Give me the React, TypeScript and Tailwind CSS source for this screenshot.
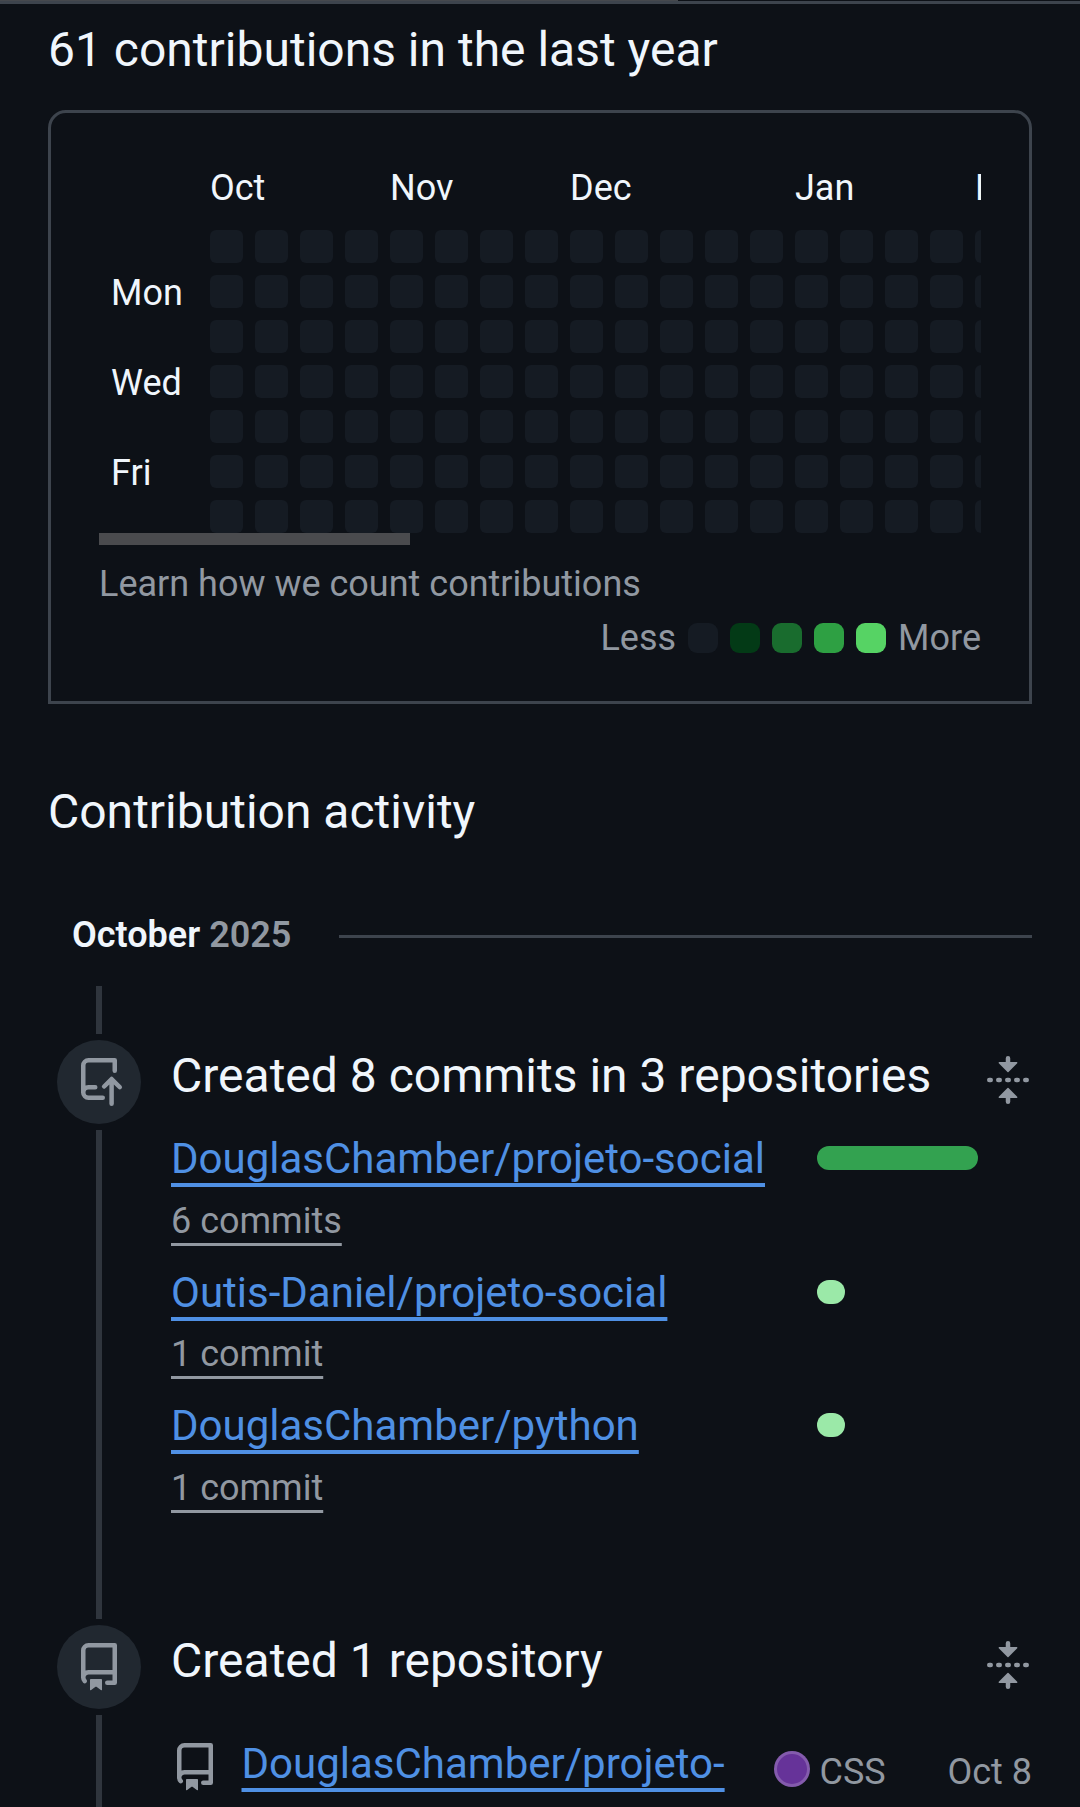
import type { ReactNode } from "react";

const MONTHS = [
  { label: "Oct", span: 4 },
  { label: "Nov", span: 4 },
  { label: "Dec", span: 5 },
  { label: "Jan", span: 4 },
  { label: "Feb", span: 4 },
];
const DAYS = ["", "Mon", "", "Wed", "", "Fri", ""];
const WEEKS = 21;

const LEVELS = ["bg-[#151b23]", "bg-[#033a16]", "bg-[#196c2e]", "bg-[#2ea043]", "bg-[#56d364]"];

const REPOS = [
  { name: "DouglasChamber/projeto-social", commits: "6 commits", width: 161, color: "bg-[#33a250]", row: "h-[134px]", head: "h-[67px]" },
  { name: "Outis-Daniel/projeto-social", commits: "1 commit", width: 28, color: "bg-[#9be9a8]", row: "h-[133px]", head: "h-[66px]" },
  { name: "DouglasChamber/python", commits: "1 commit", width: 28, color: "bg-[#9be9a8]", row: "h-[134px]", head: "h-[67px]" },
];

function Octicon({ d, className = "" }: { d: string; className?: string }) {
  return (
    <svg viewBox="0 0 16 16" className={`size-12 shrink-0 fill-[#9198a1] ${className}`} aria-hidden="true">
      <path d={d} />
    </svg>
  );
}

const REPO =
  "M2 2.5A2.5 2.5 0 0 1 4.5 0h8.75a.75.75 0 0 1 .75.75v12.5a.75.75 0 0 1-.75.75h-2.5a.75.75 0 0 1 0-1.5h1.75v-2h-8a1 1 0 0 0-.714 1.7.75.75 0 1 1-1.072 1.05A2.495 2.495 0 0 1 2 11.5Zm10.5-1h-8a1 1 0 0 0-1 1v6.708A2.486 2.486 0 0 1 4.5 9h8ZM5 12.25a.25.25 0 0 1 .25-.25h3.5a.25.25 0 0 1 .25.25v3.25a.25.25 0 0 1-.4.2l-1.45-1.087a.249.249 0 0 0-.3 0L5.4 15.7a.25.25 0 0 1-.4-.2Z";
const REPO_PUSH =
  "M2 2.5A2.5 2.5 0 0 1 4.5 0h8.75a.75.75 0 0 1 .75.75v3.5a.75.75 0 0 1-1.5 0V1.5h-8a1 1 0 0 0-1 1v6.708A2.493 2.493 0 0 1 4.5 9h2.25a.75.75 0 0 1 0 1.5H4.5a1 1 0 0 0 0 2h4.75a.75.75 0 0 1 0 1.5H4.5A2.5 2.5 0 0 1 2 11.5Zm12.43 7.79-1.48-1.484v6.444a.75.75 0 0 1-1.5 0V8.811l-1.22 1.22a.75.75 0 0 1-1.06-1.062l2.505-2.504a.75.75 0 0 1 1.06 0L15.49 9.23a.751.751 0 0 1-1.06 1.06Z";
const FOLD =
  "M10.896 2H8.75V.75a.75.75 0 0 0-1.5 0V2H5.104a.25.25 0 0 0-.177.427l2.896 2.896a.25.25 0 0 0 .354 0l2.896-2.896A.25.25 0 0 0 10.896 2ZM8.75 15.25a.75.75 0 0 1-1.5 0V14H5.104a.25.25 0 0 1-.177-.427l2.896-2.896a.25.25 0 0 1 .354 0l2.896 2.896a.25.25 0 0 1-.177.427H8.75v1.25Zm-6.5-6.5a.75.75 0 0 0 0-1.5h-.5a.75.75 0 0 0 0 1.5h.5ZM6 8a.75.75 0 0 1-.75.75h-.5a.75.75 0 0 1 0-1.5h.5A.75.75 0 0 1 6 8Zm2.25.75a.75.75 0 0 0 0-1.5h-.5a.75.75 0 0 0 0 1.5h.5ZM12 8a.75.75 0 0 1-.75.75h-.5a.75.75 0 0 1 0-1.5h.5A.75.75 0 0 1 12 8Zm2.25.75a.75.75 0 0 0 0-1.5h-.5a.75.75 0 0 0 0 1.5h.5Z";

const LINK =
  "text-[42px] leading-[63px] whitespace-nowrap text-[#4f90e4] underline decoration-[4px] underline-offset-[10px] [text-decoration-skip-ink:none]";

function Calendar() {
  return (
    <div className="overflow-hidden">
      <div className="ml-[111px] flex">
        {MONTHS.map((m) => (
          <div
            key={m.label}
            className={`shrink-0 text-[36px] leading-[42px] ${m.span === 5 ? "w-[225px]" : "w-[180px]"}`}
          >
            {m.label}
          </div>
        ))}
      </div>
      <div className="mt-[21px] flex flex-col gap-3">
        {DAYS.map((day, i) => (
          <div key={i} className="flex h-[33px] items-center gap-3">
            <div className="w-[99px] shrink-0 pt-1 pl-3 text-[36px] leading-[33px]">{day}</div>
            {Array.from({ length: WEEKS }, (_, w) => (
              <div key={w} className="size-[33px] shrink-0 rounded-md bg-[#151b23]" />
            ))}
          </div>
        ))}
      </div>
      <div className="h-3 w-[311px] bg-[#4a4b4e]" />
    </div>
  );
}

function TimelineItem({
  icon,
  title,
  className,
  children,
}: {
  icon: string;
  title: string;
  className: string;
  children: ReactNode;
}) {
  return (
    <section className={`flex gap-[30px] pl-[9px] ${className}`}>
      <div className="flex w-[84px] shrink-0 flex-col items-center">
        <div className="h-12 w-1.5 bg-[#2f353d]" />
        <div className="my-1.5 flex size-[84px] shrink-0 items-center justify-center rounded-full bg-[#212830]">
          <Octicon d={icon} />
        </div>
        <div className="w-1.5 grow bg-[#2f353d]" />
      </div>
      <div className="min-w-0 grow pt-[54px]">
        <div className="flex items-start justify-between">
          <h3 className="text-[48px] leading-[72px] whitespace-nowrap">{title}</h3>
          <Octicon d={FOLD} className="mt-4" />
        </div>
        {children}
      </div>
    </section>
  );
}

export default function App() {
  return (
    <main className="h-[1807px] w-[1080px] overflow-hidden bg-[#0d1117] font-[Roboto,sans-serif] text-[#f0f6fc]">
      <div className="h-px w-[678px] bg-[#46494e]" />
      <div className="h-[3px] bg-[#3d444d]" />

      <div className="px-12">
        <h2 className="mt-[10px] text-[48px] leading-[72px]">61 contributions in the last year</h2>

        <div className="mt-6 h-[594px] rounded-t-[18px] border-[3px] border-[#3d444d] px-12 pt-[54px]">
          <Calendar />
          <div className="mt-3 text-[36px] leading-[54px] text-[#9198a1]">Learn how we count contributions</div>
          <div className="flex items-center justify-end gap-3 text-[36px] leading-[54px] text-[#9198a1]">
            <span>Less</span>
            {LEVELS.map((level) => (
              <span key={level} className={`size-[30px] rounded-[9px] ${level}`} />
            ))}
            <span>More</span>
          </div>
        </div>

        <h2 className="mt-[72px] text-[48px] leading-[72px]">Contribution activity</h2>

        <div className="mt-[60px] flex h-[54px] items-start pl-6">
          <h3 className="w-[267px] text-[36px] leading-[54px] font-semibold whitespace-nowrap">
            October <span className="text-[#9198a1]">2025</span>
          </h3>
          <div className="mt-[27px] h-[3px] grow bg-[#3d444d]" />
        </div>

        <div className="mt-6">
          <TimelineItem icon={REPO_PUSH} title="Created 8 commits in 3 repositories" className="h-[585px]">
            <div className="mt-[15px]">
              {REPOS.map((r) => (
                <div key={r.name} className={`flex items-start ${r.row}`}>
                  <div className="w-[646px]">
                    <div className={r.head}>
                      <a className={LINK}>{r.name}</a>
                    </div>
                    <a className="block text-[36px] leading-[54px] text-[#9198a1] underline decoration-[3px] underline-offset-[10px] [text-decoration-skip-ink:none]">
                      {r.commits}
                    </a>
                  </div>
                  <div className={`mt-[19px] h-6 rounded-full ${r.color}`} style={{ width: r.width }} />
                </div>
              ))}
            </div>
          </TimelineItem>

          <TimelineItem icon={REPO} title="Created 1 repository" className="h-[400px]">
            <div className="mt-[35px] flex items-start">
              <Octicon d={REPO} className="mt-[11px]" />
              <a className={`ml-[22.5px] w-[532.5px] ${LINK}`}>DouglasChamber/projeto-</a>
              <div className="mt-[13px] flex grow items-start text-[36px] leading-[54px] text-[#9198a1]">
                <span className="mt-[6px] mr-[9.5px] size-9 rounded-full border-[3px] border-white/20 bg-[#663399]" />
                <span>CSS</span>
                <span className="ml-auto">Oct 8</span>
              </div>
            </div>
          </TimelineItem>
        </div>
      </div>
    </main>
  );
}
